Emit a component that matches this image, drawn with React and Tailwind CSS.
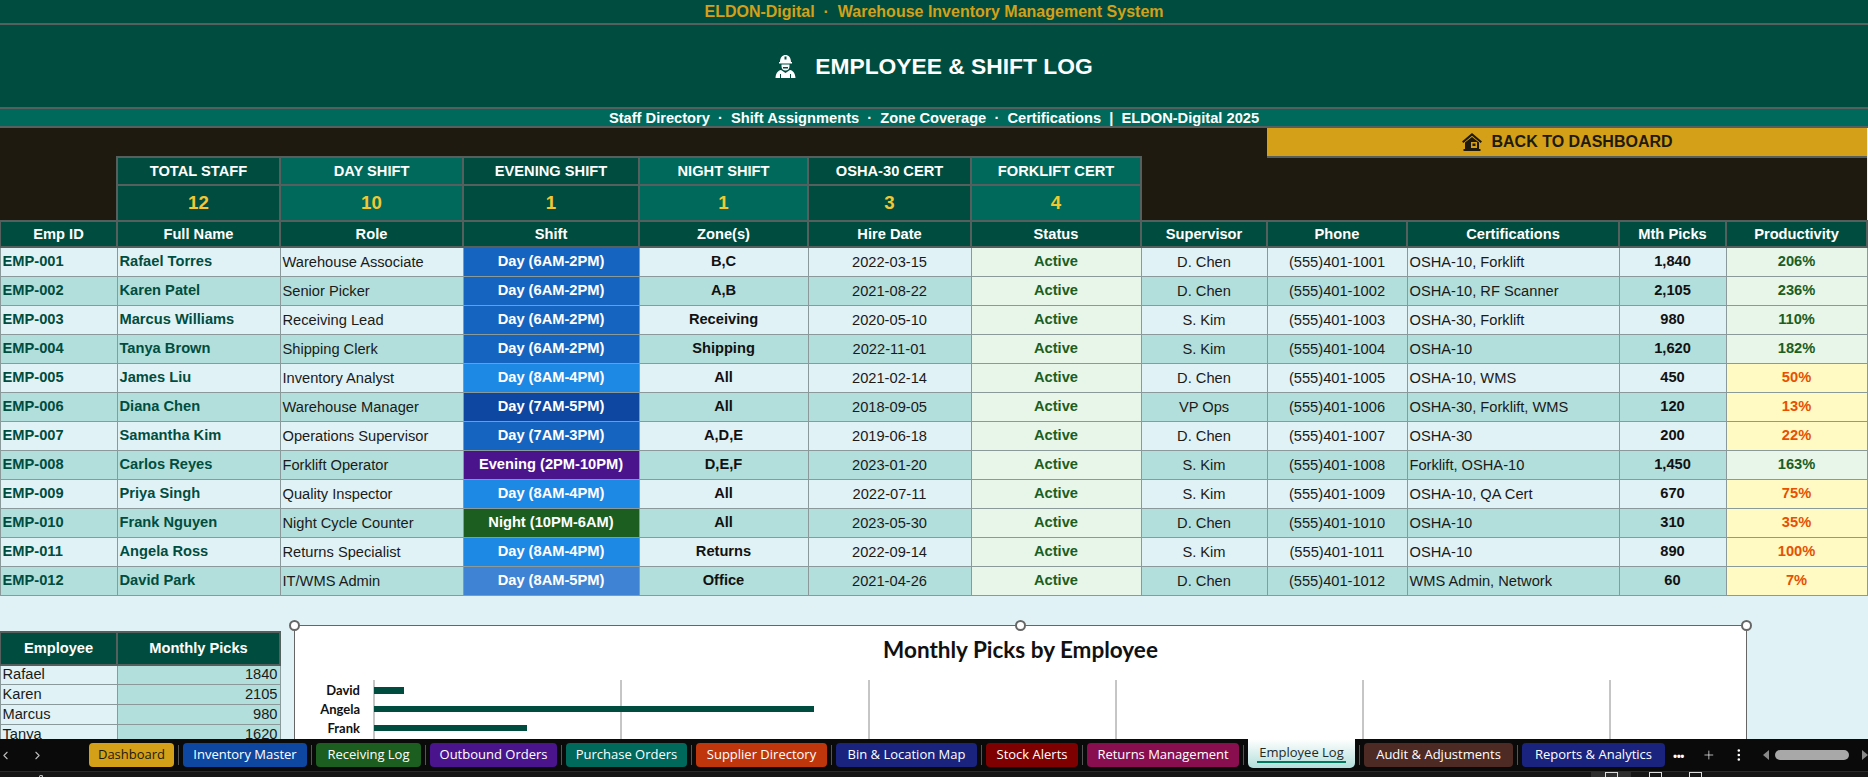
import React from "react";
import { ChevronLeft, ChevronRight, Plus, MoreVertical } from "lucide-react";

const FONT = { fontFamily: '"Liberation Sans", Arial, sans-serif' };

const KPIS = [
  { label: "TOTAL STAFF", val: 12, bg: "bg-[#004d40]" },
  { label: "DAY SHIFT", val: 10, bg: "bg-[#00695c]" },
  { label: "EVENING SHIFT", val: 1, bg: "bg-[#004d40]" },
  { label: "NIGHT SHIFT", val: 1, bg: "bg-[#00695c]" },
  { label: "OSHA-30 CERT", val: 3, bg: "bg-[#004d40]" },
  { label: "FORKLIFT CERT", val: 4, bg: "bg-[#00695c]" },
];

const HEADERS = ["Emp ID", "Full Name", "Role", "Shift", "Zone(s)", "Hire Date", "Status", "Supervisor", "Phone", "Certifications", "Mth Picks", "Productivity"];

const ROWS = [
  ["EMP-001", "Rafael Torres", "Warehouse Associate", "Day (6AM-2PM)", "bg-[#1565c0]", "B,C", "2022-03-15", "D. Chen", "(555)401-1001", "OSHA-10, Forklift", "1,840", "206%", true],
  ["EMP-002", "Karen Patel", "Senior Picker", "Day (6AM-2PM)", "bg-[#1565c0]", "A,B", "2021-08-22", "D. Chen", "(555)401-1002", "OSHA-10, RF Scanner", "2,105", "236%", true],
  ["EMP-003", "Marcus Williams", "Receiving Lead", "Day (6AM-2PM)", "bg-[#1565c0]", "Receiving", "2020-05-10", "S. Kim", "(555)401-1003", "OSHA-30, Forklift", "980", "110%", true],
  ["EMP-004", "Tanya Brown", "Shipping Clerk", "Day (6AM-2PM)", "bg-[#1565c0]", "Shipping", "2022-11-01", "S. Kim", "(555)401-1004", "OSHA-10", "1,620", "182%", true],
  ["EMP-005", "James Liu", "Inventory Analyst", "Day (8AM-4PM)", "bg-[#1e88e5]", "All", "2021-02-14", "D. Chen", "(555)401-1005", "OSHA-10, WMS", "450", "50%", false],
  ["EMP-006", "Diana Chen", "Warehouse Manager", "Day (7AM-5PM)", "bg-[#0d47a1]", "All", "2018-09-05", "VP Ops", "(555)401-1006", "OSHA-30, Forklift, WMS", "120", "13%", false],
  ["EMP-007", "Samantha Kim", "Operations Supervisor", "Day (7AM-3PM)", "bg-[#1565c0]", "A,D,E", "2019-06-18", "D. Chen", "(555)401-1007", "OSHA-30", "200", "22%", false],
  ["EMP-008", "Carlos Reyes", "Forklift Operator", "Evening (2PM-10PM)", "bg-[#4a148c]", "D,E,F", "2023-01-20", "S. Kim", "(555)401-1008", "Forklift, OSHA-10", "1,450", "163%", true],
  ["EMP-009", "Priya Singh", "Quality Inspector", "Day (8AM-4PM)", "bg-[#1e88e5]", "All", "2022-07-11", "S. Kim", "(555)401-1009", "OSHA-10, QA Cert", "670", "75%", false],
  ["EMP-010", "Frank Nguyen", "Night Cycle Counter", "Night (10PM-6AM)", "bg-[#1b5e20]", "All", "2023-05-30", "D. Chen", "(555)401-1010", "OSHA-10", "310", "35%", false],
  ["EMP-011", "Angela Ross", "Returns Specialist", "Day (8AM-4PM)", "bg-[#1e88e5]", "Returns", "2022-09-14", "S. Kim", "(555)401-1011", "OSHA-10", "890", "100%", false],
  ["EMP-012", "David Park", "IT/WMS Admin", "Day (8AM-5PM)", "bg-[#3f84d4]", "Office", "2021-04-26", "D. Chen", "(555)401-1012", "WMS Admin, Network", "60", "7%", false],
];

const MINI = [["Rafael", 1840], ["Karen", 2105], ["Marcus", 980], ["Tanya", 1620]];

const TABS = [
  { name: "Dashboard", w: "w-[85px]", cls: "bg-[#d4a017] text-[#1e1a10]" },
  { name: "Inventory Master", w: "w-[124px]", cls: "bg-[#0d47a1] text-white" },
  { name: "Receiving Log", w: "w-[105px]", cls: "bg-[#1b5e20] text-white" },
  { name: "Outbound Orders", w: "w-[127px]", cls: "bg-[#4a148c] text-white" },
  { name: "Purchase Orders", w: "w-[121px]", cls: "bg-[#00695c] text-white" },
  { name: "Supplier Directory", w: "w-[131px]", cls: "bg-[#bf360c] text-white" },
  { name: "Bin & Location Map", w: "w-[141px]", cls: "bg-[#1a237e] text-white" },
  { name: "Stock Alerts", w: "w-[92px]", cls: "bg-[#7f0000] text-white" },
  { name: "Returns Management", w: "w-[152px]", cls: "bg-[#880e4f] text-white" },
  { name: "Employee Log", w: "w-[107px]", active: true },
  { name: "Audit & Adjustments", w: "w-[149px]", cls: "bg-[#4e2a25] text-white" },
  { name: "Reports & Analytics", w: "w-[143px]", cls: "bg-[#1a237e] text-white" },
];

const WorkerIcon = () => (
  <svg width="21" height="24" viewBox="0 0 21 24" fill="#fff">
    <path d="M5 8 C5 3.5 7.5 1 10.5 1 C13.5 1 16 3.5 16 8 L17 8 L17 9.5 L4 9.5 L4 8 Z" />
    <path d="M6.5 10.5 H14.5 V12 C14.5 15 12.8 16.5 10.5 16.5 C8.2 16.5 6.5 15 6.5 12 Z" />
    <path d="M6 16 L10.5 19 L15 16 C18 16.8 20 18.5 20.5 24 H0.5 C1 18.5 3 16.8 6 16 Z" />
    <rect x="9.5" y="2.5" width="2" height="3" fill="#004d40" />
    <path d="M8 13 H13 V14.5 H8 Z" fill="#004d40" />
    <path d="M5 20 H6 V24 H5 Z M15 20 H16 V24 H15 Z" fill="#004d40" />
  </svg>
);

const HouseIcon = () => (
  <svg width="20" height="18" viewBox="0 0 20 18" fill="#1e1a10">
    <path d="M10 0 L20 8.5 L18.6 10 L10 2.8 L1.4 10 L0 8.5 Z" />
    <path d="M3 9.5 L10 4 L17 9.5 V16 H3 Z M9 9 V15 H15 V9 Z" fillRule="evenodd" />
    <rect x="1.5" y="16" width="17" height="2" />
    <rect x="10.5" y="10.5" width="3" height="2.5" />
  </svg>
);

const Handle = ({ className }) => (
  <span className={`absolute w-[11px] h-[11px] rounded-full bg-white border-2 border-[#666] ${className}`} />
);

export default function App() {
  const headCell = "border-2 border-[#55605e] text-center align-middle font-bold p-0";
  const cell = "border border-[#8a9a9a] p-0 align-middle leading-none whitespace-nowrap overflow-hidden";

  return (
    <div className="w-[1868px] h-[777px] flex flex-col overflow-hidden bg-[#e0f2f5] text-[14.67px]" style={FONT}>
      {/* BANDS */}
      <div className="h-[25px] shrink-0 bg-[#004d40] border-b-2 border-[#55605e] flex items-center justify-center text-[#d4a017] font-bold text-[16px] whitespace-pre">
        ELDON-Digital  ·  Warehouse Inventory Management System
      </div>
      <div className="h-[84px] shrink-0 bg-[#004d40] border-b-2 border-[#55605e] flex items-center justify-center gap-[19px] text-white font-bold text-[22.8px]">
        <WorkerIcon />
        <span>EMPLOYEE &amp; SHIFT LOG</span>
      </div>
      <div className="h-[19px] shrink-0 bg-[#00695c] border-b-2 border-[#55605e] flex items-center justify-center text-white font-bold text-[14.67px] whitespace-pre">
        Staff Directory  ·  Shift Assignments  ·  Zone Coverage  ·  Certifications  |  ELDON-Digital 2025
      </div>

      {/* SHEET */}
      <div className="flex-1 min-h-0 overflow-hidden">
        <table className="table-fixed border-collapse w-[1867px] -ml-[1px]">
          <colgroup>
            {[117, 163, 183, 176, 169, 163, 170, 126, 140, 212, 107, 141].map((w, i) => (
              <col key={i} style={{ width: w }} />
            ))}
          </colgroup>
          <tbody>
            <tr className="h-[29px]">
              <td colSpan={8} className="bg-[#1e1a10] p-0" />
              <td colSpan={4} className="bg-[#d4a017] border-b-2 border-[#55605e] p-0">
                <div className="flex items-center justify-center gap-[10px] font-bold text-[16px] text-[#1e1a10]">
                  <HouseIcon />
                  <span>BACK TO DASHBOARD</span>
                </div>
              </td>
            </tr>
            <tr className="h-[28px]">
              <td rowSpan={2} className="bg-[#1e1a10] p-0" />
              {KPIS.map((k) => (
                <td key={k.label} className={`${headCell} ${k.bg} text-white`}>{k.label}</td>
              ))}
              <td rowSpan={2} colSpan={5} className="bg-[#1e1a10] p-0" />
            </tr>
            <tr className="h-[36px]">
              {KPIS.map((k) => (
                <td key={k.label} className={`${headCell} ${k.bg} text-[18.67px] text-[#f2c832]`}>{k.val}</td>
              ))}
            </tr>
            <tr className="h-[26px]">
              {HEADERS.map((h) => (
                <td key={h} className={`${headCell} bg-[#004d40] text-white`}>{h}</td>
              ))}
            </tr>
            {ROWS.map((r, i) => {
              const bg = i % 2 === 0 ? "bg-[#e0f2f5]" : "bg-[#b2dfdb]";
              return (
                <tr key={r[0]} className={`h-[29px] ${bg}`}>
                  <td className={`${cell} pl-[2px] font-bold text-[#004d40]`}>{r[0]}</td>
                  <td className={`${cell} pl-[2px] font-bold text-[#004d40]`}>{r[1]}</td>
                  <td className={`${cell} pl-[2px] pt-[2px] text-[#1a1a1a]`}>{r[2]}</td>
                  <td className={`${cell} ${r[4]} text-center font-bold text-white`}>{r[3]}</td>
                  <td className={`${cell} text-center font-bold text-[#111]`}>{r[5]}</td>
                  <td className={`${cell} pt-[2px] text-center text-[#1a1a1a]`}>{r[6]}</td>
                  <td className={`${cell} bg-[#e8f5e9] text-center font-bold text-[#1b5e20]`}>Active</td>
                  <td className={`${cell} pt-[2px] text-center text-[#1a1a1a]`}>{r[7]}</td>
                  <td className={`${cell} pt-[2px] text-center text-[#1a1a1a]`}>{r[8]}</td>
                  <td className={`${cell} pl-[2px] pt-[2px] text-[#1a1a1a]`}>{r[9]}</td>
                  <td className={`${cell} text-center font-bold text-[#111]`}>{r[10]}</td>
                  <td className={`${cell} text-center font-bold ${r[12] ? "bg-[#e8f5e9] text-[#1b5e20]" : "bg-[#fff9c4] text-[#e65100]"}`}>{r[11]}</td>
                </tr>
              );
            })}
          </tbody>
        </table>

        {/* LOWER SECTION */}
        <div className="flex items-start pt-[29px]">
          <table className="table-fixed border-collapse w-[280px] -ml-[1px] mt-[6px] shrink-0">
            <colgroup>
              <col style={{ width: 117 }} />
              <col style={{ width: 163 }} />
            </colgroup>
            <tbody>
              <tr className="h-[33px]">
                <td className={`${headCell} bg-[#004d40] text-white`}>Employee</td>
                <td className={`${headCell} bg-[#004d40] text-white`}>Monthly Picks</td>
              </tr>
              {MINI.map(([n, v]) => (
                <tr key={n} className="h-[20px]">
                  <td className={`${cell} pl-[2px] bg-[#e0f2f5] text-[#1a1a1a]`}>{n}</td>
                  <td className={`${cell} pr-[2px] bg-[#b2dfdb] text-right text-[#1a1a1a]`}>{v}</td>
                </tr>
              ))}
            </tbody>
          </table>

          <div className="relative ml-[13px] w-[1453px] h-[300px] shrink-0 bg-white border border-[#666]">
            <Handle className="-left-[6px] -top-[6px]" />
            <Handle className="left-[720px] -top-[6px]" />
            <Handle className="-right-[6px] -top-[6px]" />
            <div className="h-[54px] pb-[5px] flex items-center justify-center font-bold text-[22.5px] text-[#111]" style={{ fontFamily: "Lato, sans-serif" }}>
              Monthly Picks by Employee
            </div>
            <svg width="1451" height="120" className="block" style={{ fontFamily: "Lato, sans-serif" }}>
              {[79, 326, 574, 821, 1068, 1315].map((x) => (
                <line key={x} x1={x} x2={x} y1="0" y2="120" stroke="#8c8c8c" strokeWidth="1" />
              ))}
              <rect x="79" y="7" width="30" height="7" fill="#004d40" />
              <rect x="79" y="26" width="440" height="6" fill="#004d40" />
              <rect x="79" y="45" width="153" height="6" fill="#004d40" />
              <text x="65" y="15" textAnchor="end" fontSize="13" fontWeight="700" fill="#111">David</text>
              <text x="65" y="34" textAnchor="end" fontSize="13" fontWeight="700" fill="#111">Angela</text>
              <text x="65" y="53" textAnchor="end" fontSize="13" fontWeight="700" fill="#111">Frank</text>
            </svg>
          </div>
        </div>
      </div>

      {/* SHEET TABS */}
      <div className="h-[32px] shrink-0 bg-[#0a0a0a] flex items-center text-[13px] relative" style={{ fontFamily: '"Open Sans", sans-serif' }}>
        <div className="w-[89px] shrink-0 flex items-center text-[#bbb]">
          <ChevronLeft size={13} className="ml-[-1px]" />
          <ChevronRight size={13} className="ml-[19px]" />
        </div>
        {TABS.map((t, i) => (
          <React.Fragment key={t.name}>
            {t.active ? (
              <div className={`${t.w} h-[29px] -mt-[3px] shrink-0 rounded-b-[5px] bg-gradient-to-b from-white to-[#b2dfdb] flex flex-col items-center justify-center text-[#1e2a28]`}>
                <span className="leading-[17px] border-b-2 border-[#00795c] px-[2px]">{t.name}</span>
              </div>
            ) : (
              <div className={`${t.w} h-[24px] shrink-0 rounded-[4px] flex items-center justify-center whitespace-nowrap ${t.cls}`}>{t.name}</div>
            )}
            {i < TABS.length - 1 && <span className="w-[9px] shrink-0 flex justify-center"><span className="w-px h-[20px] bg-[#555]" /></span>}
          </React.Fragment>
        ))}
        <span className="ml-[8px] w-[12px] text-white font-bold text-[11px] leading-none tracking-[-0.5px]">•••</span>
        <Plus size={14} className="ml-[17px] text-white" strokeWidth={1.2} />
        <MoreVertical size={16} className="ml-[16px] text-white" />
        <div className="ml-[16px] flex items-center text-[#999]">
          <span className="w-0 h-0 border-y-[5px] border-y-transparent border-r-[6px] border-r-[#888]" />
          <span className="ml-[6px] w-[74px] h-[10px] rounded-full bg-[#a8a8a8]" />
          <span className="ml-[13px] w-0 h-0 border-y-[5px] border-y-transparent border-l-[6px] border-l-[#888]" />
        </div>
      </div>

      {/* STATUS BAR */}
      <div className="h-[6px] shrink-0 bg-[#161616] border-t border-[#2b2b2b] flex items-start">
        <span className="ml-[39px] mt-[3px] w-[4px] h-[3px] rounded-t-full border border-[#ddd] border-b-0" />
        <div className="ml-[1548px] w-[40px] h-[6px] bg-[#2e2e2e] flex justify-center">
          <span className="w-[13px] h-[6px] border border-b-0 border-[#ddd]" />
        </div>
        <span className="ml-[18px] w-[13px] h-[6px] border border-b-0 border-[#ddd]" />
        <span className="ml-[27px] w-[13px] h-[6px] border border-b-0 border-[#ddd]" />
      </div>
    </div>
  );
}
